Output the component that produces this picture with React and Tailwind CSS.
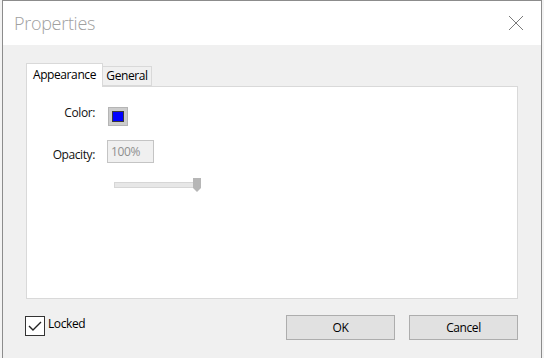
export default function App() {
  const font = { fontFamily: '"Open Sans", "Noto Sans", sans-serif' };
  return (
    <div className="w-[544px] h-[358px] overflow-hidden bg-[#f3f3f3] relative" style={font}>
      <div className="ml-[2px] w-[540px] h-[370px] border border-[#8c8c8c] bg-[#f0f0f0] flex flex-col">
        {/* title bar */}
        <div className="h-[44px] bg-white flex items-center justify-between pl-[11px] pr-[17px] shrink-0">
          <span className="text-[18px] font-light text-[#a0a0a0] tracking-[-0.3px] leading-none -mt-[1px]">Properties</span>
          <svg width="16" height="16" viewBox="0 0 16 16" className="-mt-[1px]">
            <path d="M1 1 L15 15 M15 1 L1 15" stroke="#7a7a7a" strokeWidth="1" fill="none" />
          </svg>
        </div>
        {/* body */}
        <div className="flex flex-col pl-[23px] pr-[23px] pt-[18px] text-[12px] tracking-[-0.4px]">
          {/* tabs */}
          <div className="flex items-end h-[23px] relative z-10">
            <div className="h-[24px] w-[77px] bg-white border border-b-0 border-[#d9d9d9] text-black flex items-center justify-center -mb-[1px] pb-[2px]">
              Appearance
            </div>
            <div className="h-[20px] w-[49px] bg-[#f0f0f0] border border-l-0 border-[#d9d9d9] text-black flex items-center justify-center">
              General
            </div>
          </div>
          {/* panel */}
          <div className="w-[492px] h-[213px] bg-white border border-[#d9d9d9] flex flex-col pt-[20px]">
            <div className="flex items-center h-[18px]">
              <div className="w-[68px] text-right text-[#111] leading-none -mt-[6px]">Color:</div>
              <div className="ml-[13px] w-[20px] h-[19px] bg-[#cccccc] border border-[#b5b5b5] flex items-center justify-center">
                <div className="w-[12px] h-[11px] bg-[#0000ff] border border-[#3a3a3a]" />
              </div>
            </div>
            <div className="flex items-center mt-[15px] h-[23px]">
              <div className="w-[68px] text-right text-[#111] leading-none mt-[6px]">Opacity:</div>
              <div className="ml-[12px] w-[47px] h-[23px] bg-[#f0f0f0] border border-[#c4c4c4] text-[#8f8f8f] pl-[3px] flex items-center leading-none">
                100%
              </div>
            </div>
            <div className="relative ml-[87px] mt-[19px] w-[87px] h-[6px]">
              <div className="w-[82px] h-[6px] bg-[#e7e7e7] border border-[#d6d6d6]" />
              <svg width="8" height="14" viewBox="0 0 8 14" className="absolute left-[79px] -top-[4px]">
                <path d="M0 0 H8 V10 L4 14 L0 10 Z" fill="#b6b6b6" />
              </svg>
            </div>
          </div>
          {/* bottom row */}
          <div className="flex items-start mt-[16px] w-[492px]">
            <div className="flex items-start -ml-[1px] mt-[1px]">
              <div className="w-[20px] h-[20px] border border-[#333] bg-white flex items-center justify-center">
                <svg width="14" height="12" viewBox="0 0 14 12">
                  <path d="M1 6 L5 10 L13 2" stroke="#222" strokeWidth="1.4" fill="none" />
                </svg>
              </div>
              <span className="ml-[3px] text-black leading-none mt-[2px]">Locked</span>
            </div>
            <div className="ml-auto flex gap-[14px]">
              <div className="w-[109px] h-[25px] bg-[#e1e1e1] border border-[#adadad] text-black flex items-center justify-center">OK</div>
              <div className="w-[109px] h-[25px] bg-[#e1e1e1] border border-[#adadad] text-black flex items-center justify-center">Cancel</div>
            </div>
          </div>
        </div>
      </div>
    </div>
  );
}
